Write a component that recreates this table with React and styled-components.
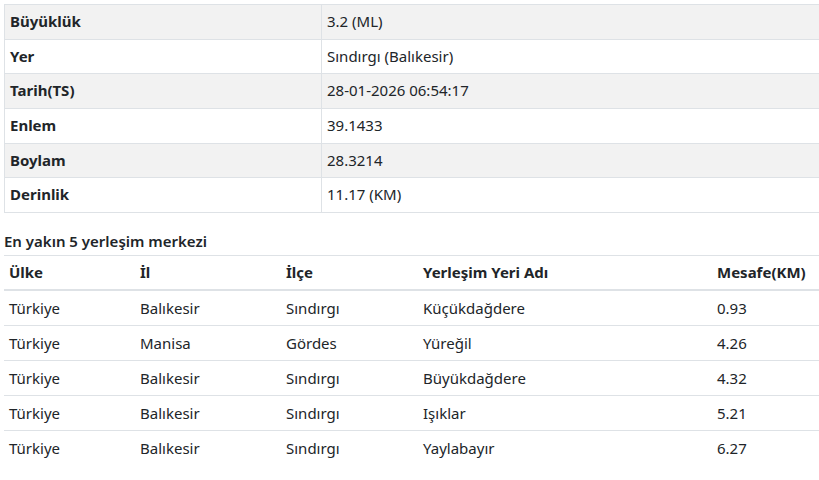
import React from "react";
import styled, { createGlobalStyle } from "styled-components";

const Global = createGlobalStyle`
  html, body { margin: 0; padding: 0; background: #fff; }
  body {
    font-family: "Noto Sans", "Open Sans", "Liberation Sans", sans-serif;
    font-size: 15px;
    color: #212529;
  }
`;

const Page = styled.div`
  padding: 4px 0 0 4px;
  overflow: hidden;
  width: 815px;
`;

const InfoTable = styled.table`
  width: 100%;
  border-collapse: collapse;
  border: 1px solid #dee2e6;
  border-right: none;
  table-layout: fixed;
`;

const InfoRow = styled.tr`
  background: ${(p) => (p.$striped ? "#f2f2f2" : "#fff")};
`;

const InfoCell = styled.td`
  border: 1px solid #dee2e6;
  border-right: ${(p) => (p.$last ? "none" : "1px solid #dee2e6")};
  padding: 6px 5px;
  line-height: 21.67px;
  font-weight: ${(p) => (p.$bold ? 700 : 400)};
  width: ${(p) => p.$w || "auto"};
  white-space: nowrap;
`;

const Title = styled.h5`
  margin: 17px 0 3px 0;
  font-size: 15px;
  font-weight: 600;
  line-height: 22px;
`;

const ListTable = styled.table`
  width: 100%;
  border-collapse: collapse;
  table-layout: fixed;
`;

const HeadCell = styled.th`
  text-align: left;
  font-weight: 700;
  padding: 6px 5px;
  line-height: 21px;
  border-top: 1px solid #dee2e6;
  border-bottom: 2px solid #dee2e6;
  width: ${(p) => p.$w || "auto"};
  white-space: nowrap;
`;

const BodyCell = styled.td`
  padding: 6px 5px;
  line-height: 22px;
  border-top: 1px solid #dee2e6;
  white-space: nowrap;
`;

const info = [
  ["Büyüklük", "3.2 (ML)"],
  ["Yer", "Sındırgı (Balıkesir)"],
  ["Tarih(TS)", "28-01-2026 06:54:17"],
  ["Enlem", "39.1433"],
  ["Boylam", "28.3214"],
  ["Derinlik", "11.17 (KM)"],
];

const cols = [
  ["Ülke", "121px"],
  ["İl", "136px"],
  ["İlçe", "127px"],
  ["Yerleşim Yeri Adı", "284px"],
  ["Mesafe(KM)", "auto"],
];

const rows = [
  ["Türkiye", "Balıkesir", "Sındırgı", "Küçükdağdere", "0.93"],
  ["Türkiye", "Manisa", "Gördes", "Yüreğil", "4.26"],
  ["Türkiye", "Balıkesir", "Sındırgı", "Büyükdağdere", "4.32"],
  ["Türkiye", "Balıkesir", "Sındırgı", "Işıklar", "5.21"],
  ["Türkiye", "Balıkesir", "Sındırgı", "Yaylabayır", "6.27"],
];

export default function App() {
  return (
    <>
      <Global />
      <Page>
        <InfoTable>
          <tbody>
            {info.map(([k, v], i) => (
              <InfoRow key={k} $striped={i % 2 === 0}>
                <InfoCell $bold $w="306px">{k}</InfoCell>
                <InfoCell $last>{v}</InfoCell>
              </InfoRow>
            ))}
          </tbody>
        </InfoTable>
        <Title>En yakın 5 yerleşim merkezi</Title>
        <ListTable>
          <thead>
            <tr>
              {cols.map(([c, w]) => (
                <HeadCell key={c} $w={w}>{c}</HeadCell>
              ))}
            </tr>
          </thead>
          <tbody>
            {rows.map((r, i) => (
              <tr key={i}>
                {r.map((c, j) => (
                  <BodyCell key={j}>{c}</BodyCell>
                ))}
              </tr>
            ))}
          </tbody>
        </ListTable>
      </Page>
    </>
  );
}
